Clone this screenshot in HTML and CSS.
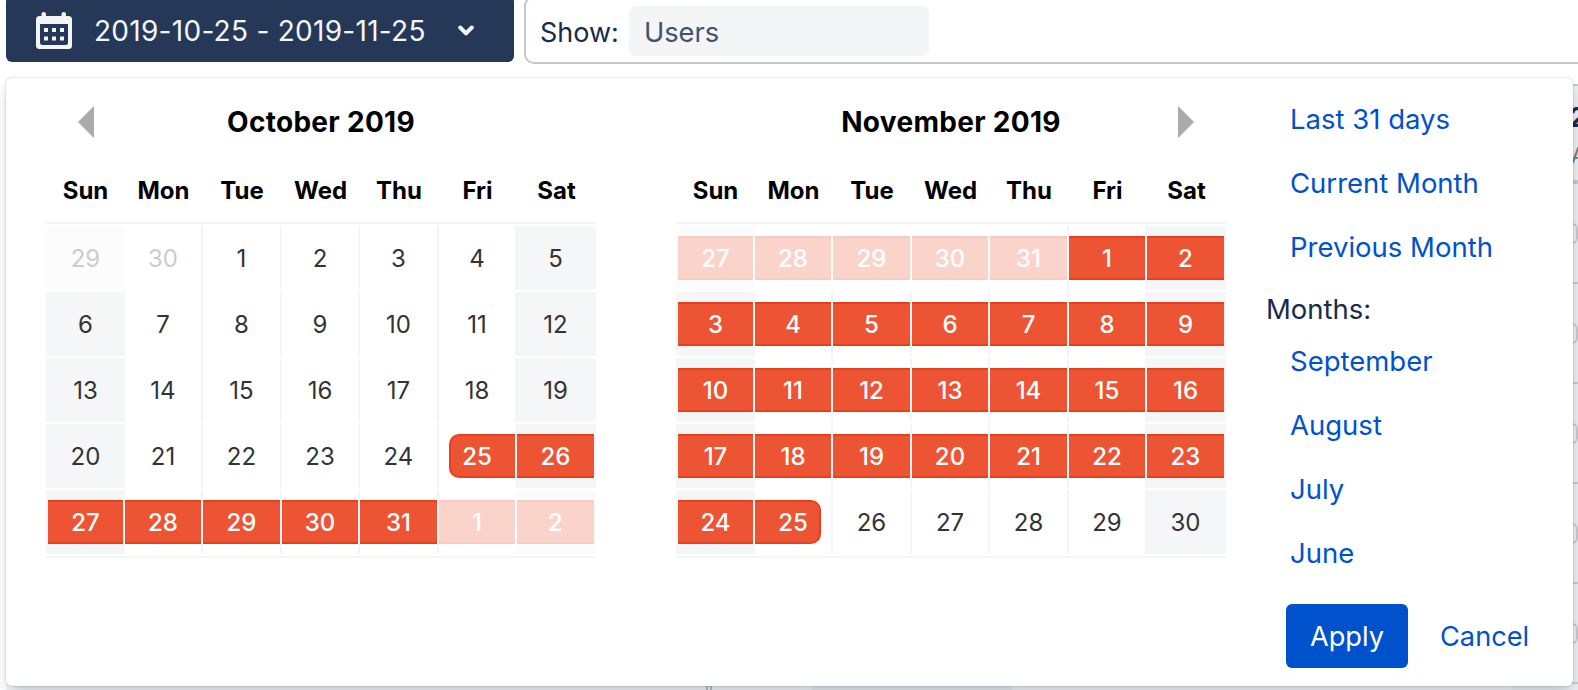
FILE: index.html
```html
<!DOCTYPE html>
<html lang="en">
<head>
<meta charset="utf-8">
<title>Date range</title>
<link rel="stylesheet" href="styles.css">
</head>
<body>
<div class="page">
  <header class="toolbar">
    <button class="range">
      <svg class="cal-icon" width="36" height="37" viewBox="0 0 36 37">
        <rect x="0" y="4" width="36" height="33" rx="3.5" fill="#f4f5f7"/>
        <rect x="5.5" y="0" width="4.5" height="8" rx="2.2" fill="#f4f5f7"/>
        <rect x="25.5" y="0" width="4.5" height="8" rx="2.2" fill="#f4f5f7"/>
        <path d="M4 12h28v18.5a2.5 2.5 0 0 1-2.500 2.500h-23a2.500 2.500 0 0 1-2.500-2.500z" fill="#253858"/>
        <path d="M8 16h4v4h-4zM16 16h4v4h-4zM24 16h4v4h-4zM8 24.500h4v4h-4zM16 24.500h4v4h-4zM24 24.500h4v4h-4z" fill="#f4f5f7"/>
      </svg>
      <span class="range-text">2019-10-25 - 2019-11-25</span>
      <svg class="chevron" width="16" height="11" viewBox="0 0 16 11"><path d="M2.200 2.500L8 8.300L13.800 2.500" fill="none" stroke="#f4f5f7" stroke-width="4" stroke-linecap="round" stroke-linejoin="round"/></svg>
    </button>
    <div class="filter">
      <span class="filter-label">Show:</span>
      <span class="filter-input">Users</span>
    </div>
  </header>

  <div class="report">
    <div class="report-head"><b>2</b><span>A</span></div>
    <div class="report-row"><i></i></div>
    <div class="report-row"><i></i></div>
    <div class="report-row"><i></i></div>
    <div class="report-row"><i></i></div>
    <div class="report-row"><i></i></div>
  </div>
  <div class="footer-peek"><i class="bars"></i><i class="field"></i></div>

  <section class="picker">
    <div class="month">
      <div class="title"><svg class="prev" width="16" height="32" viewBox="0 0 16 32"><path d="M16 0v32L0 16z" fill="#aaa"/></svg><span>October 2019</span></div>
      <div class="weekdays"><span>Sun</span><span>Mon</span><span>Tue</span><span>Wed</span><span>Thu</span><span>Fri</span><span>Sat</span></div>
      <div class="days">
        <div class="d we off"><span>29</span></div><div class="d off"><span>30</span></div><div class="d"><span>1</span></div><div class="d"><span>2</span></div><div class="d"><span>3</span></div><div class="d"><span>4</span></div><div class="d we"><span>5</span></div>
        <div class="d we"><span>6</span></div><div class="d"><span>7</span></div><div class="d"><span>8</span></div><div class="d"><span>9</span></div><div class="d"><span>10</span></div><div class="d"><span>11</span></div><div class="d we"><span>12</span></div>
        <div class="d we"><span>13</span></div><div class="d"><span>14</span></div><div class="d"><span>15</span></div><div class="d"><span>16</span></div><div class="d"><span>17</span></div><div class="d"><span>18</span></div><div class="d we"><span>19</span></div>
        <div class="d we"><span>20</span></div><div class="d"><span>21</span></div><div class="d"><span>22</span></div><div class="d"><span>23</span></div><div class="d"><span>24</span></div><div class="d in start"><span>25</span></div><div class="d we in"><span>26</span></div>
        <div class="d we in"><span>27</span></div><div class="d in"><span>28</span></div><div class="d in"><span>29</span></div><div class="d in"><span>30</span></div><div class="d in"><span>31</span></div><div class="d in off solid"><span>1</span></div><div class="d we in off"><span>2</span></div>
      </div>
    </div>
    <div class="month">
      <div class="title"><span>November 2019</span><svg class="next" width="16" height="32" viewBox="0 0 16 32"><path d="M0 0v32L16 16z" fill="#aaa"/></svg></div>
      <div class="weekdays"><span>Sun</span><span>Mon</span><span>Tue</span><span>Wed</span><span>Thu</span><span>Fri</span><span>Sat</span></div>
      <div class="days">
        <div class="d we in off"><span>27</span></div><div class="d in off"><span>28</span></div><div class="d in off"><span>29</span></div><div class="d in off"><span>30</span></div><div class="d in off"><span>31</span></div><div class="d in"><span>1</span></div><div class="d we in"><span>2</span></div>
        <div class="d we in"><span>3</span></div><div class="d in"><span>4</span></div><div class="d in"><span>5</span></div><div class="d in"><span>6</span></div><div class="d in"><span>7</span></div><div class="d in"><span>8</span></div><div class="d we in"><span>9</span></div>
        <div class="d we in"><span>10</span></div><div class="d in"><span>11</span></div><div class="d in"><span>12</span></div><div class="d in"><span>13</span></div><div class="d in"><span>14</span></div><div class="d in"><span>15</span></div><div class="d we in"><span>16</span></div>
        <div class="d we in"><span>17</span></div><div class="d in"><span>18</span></div><div class="d in"><span>19</span></div><div class="d in"><span>20</span></div><div class="d in"><span>21</span></div><div class="d in"><span>22</span></div><div class="d we in"><span>23</span></div>
        <div class="d we in"><span>24</span></div><div class="d in end"><span>25</span></div><div class="d"><span>26</span></div><div class="d"><span>27</span></div><div class="d"><span>28</span></div><div class="d"><span>29</span></div><div class="d we"><span>30</span></div>
      </div>
    </div>
    <aside class="presets">
      <a>Last 31 days</a>
      <a>Current Month</a>
      <a>Previous Month</a>
      <h4>Months:</h4>
      <a>September</a>
      <a>August</a>
      <a>July</a>
      <a>June</a>
      <div class="actions"><button class="apply">Apply</button><button class="cancel">Cancel</button></div>
    </aside>
  </section>
</div>
</body>
</html>
```
FILE: styles.css
```css
* { box-sizing: border-box; }
body { margin: 0; background: #fff; overflow: hidden; }
.page {
  position: relative;
  width: 1578px;
  height: 690px;
  overflow: hidden;
  font: 400 27px/32px Inter, "Liberation Sans", sans-serif;
  color: #172b4d;
}
button { border: 0; background: none; font: inherit; padding: 0; }

.toolbar { display: flex; gap: 10px; height: 64px; padding-left: 6px; }
.range {
  display: flex;
  align-items: center;
  width: 508px;
  height: 66px;
  margin-top: -4px;
  padding: 4px 40px 2px 30px;
  border-radius: 6px;
  background: #253858;
  color: #f4f5f7;
}
.range-text { margin: 1px 0 0 22px; font-size: 28px; letter-spacing: 0.28px; white-space: nowrap; }
.cal-icon { flex: none; }
.chevron { flex: none; margin-left: auto; }
.filter {
  display: flex;
  align-items: center;
  flex: 1;
  height: 68px;
  margin: -4px -20px 0 0;
  padding: 2px 0 0 14px;
  border: 2px solid #c8c8c8;
  border-radius: 10px;
}
.filter-label { padding-top: 3px; }
.filter-input {
  width: 300px;
  height: 50px;
  margin-left: 10px;
  padding: 11px 15px 7px;
  border-radius: 6px;
  background: #f4f5f7;
  color: #42526e;
  font-size: 27.3px;
}

.report {
  position: absolute;
  left: 1512px;
  top: 84px;
  width: 88px;
  height: 606px;
  background: #ebedf1;
  border-top: 2px solid #c8c8c8;
}
.report-head { height: 98px; padding: 14px 0 0 57px; border-bottom: 4px solid #c8c8c8; line-height: 36px; }
.report-head b { display: block; border-bottom: 3px solid #172b4d; height: 27px; }
.report-head span { display: block; margin: 10px 0 0 2px; font-size: 22px; color: #777; }
.report-row { height: 100px; padding-top: 39px; border-bottom: 2px solid #c8c8c8; }
.report-row i { display: block; width: 66px; height: 21px; border: 2px solid #c8c8c8; border-radius: 6px; }
.footer-peek { position: absolute; left: 6px; top: 684px; width: 1506px; height: 6px; display: flex; background: #f4f5f7; }
.bars { width: 6px; margin-left: 700px; border: solid #b9bcc2; border-width: 0 2px; }
.field { width: 200px; margin-left: 100px; background: #e9ebee; }

.picker {
  position: absolute;
  left: 6px;
  top: 78px;
  width: 1567px;
  height: 608px;
  display: grid;
  grid-template-columns: 550px 550px 1fr;
  column-gap: 80px;
  padding-left: 40px;
  border-radius: 6px;
  background: #fff;
  box-shadow: 0 8px 16px -4px rgba(9, 30, 66, .25), 0 0 2px rgba(9, 30, 66, .31);
}
.title {
  position: relative;
  height: 60px;
  padding-top: 28px;
  text-align: center;
  font-size: 28px;
  font-weight: 700;
  color: #000;
  letter-spacing: 0.3px;
}
.prev { position: absolute; left: 32px; top: 28px; }
.next { position: absolute; right: 32px; top: 28px; }
.weekdays, .days { display: grid; grid-template-columns: 77px 78px 79px 78px 79px 78px 81px; }
.weekdays {
  height: 86px;
  padding-top: 37px;
  border-bottom: 2px solid #f4f5f5;
  font-size: 24px;
  line-height: 32px;
  font-weight: 700;
  color: #000;
  text-align: center;
}
.weekdays span { padding-left: 3px; }
.weekdays span:first-child, .weekdays span:last-child { padding-left: 2px; }
.days { row-gap: 2px; padding: 2px 0; border-bottom: 2px solid #f4f5f5; }
.d {
  display: flex;
  height: 64px;
  padding: 10px 0;
  border-left: 2px solid #f4f5f7;
  font-size: 24px;
  line-height: 46px;
  text-align: center;
  color: #333;
}
.d span { flex: 1; height: 44px; }
.d:nth-child(7n+1) { border-left-color: #f4f6f8; }
.d:nth-child(7n) { border-right: 2px solid #f4f6f8; }
.d:nth-child(7n+2) { border-left-color: #f4f6f8; }
.we { background: #f4f6f8; }
.off { color: #ccc; border-color: #fcfcfc; }
.off.d:nth-child(7n+1), .off.d:nth-child(7n), .off.d:nth-child(7n+2) { border-color: #fcfcfc; }
.off.we { background: #fcfcfc; }
.off.solid { border-left-color: #f4f5f7; }
.in span {
  background: #ed5434;
  border: solid #e93f1c;
  border-width: 2px 0;
  line-height: 42px;
  color: #fff;
  font-weight: 500;
}
.in.off span { background: #fad4cb; border-color: #f9ccc2; }
.start span { margin-left: 10px; padding-right: 12px; border-left-width: 2px; border-radius: 10px 0 0 10px; }
.end span { margin-right: 10px; padding-left: 12px; border-right-width: 2px; border-radius: 0 10px 10px 0; }

.presets { display: flex; flex-direction: column; margin-left: -41px; padding-top: 9px; font-size: 27.5px; }
.presets a { height: 64px; padding-left: 25px; line-height: 64px; color: #0052cc; }
.presets h4 { margin: 0; height: 50px; padding-left: 1px; line-height: 60px; font-size: 27.5px; font-weight: 400; }
.actions { display: flex; margin: 19px 0 0 21px; font-size: 27.2px; }
.actions button { height: 64px; padding-top: 1px; }
.actions .apply { width: 122px; border-radius: 6px; background: #0052cc; color: #fff; }
.cancel { margin-left: 32px; color: #0052cc; }
```
